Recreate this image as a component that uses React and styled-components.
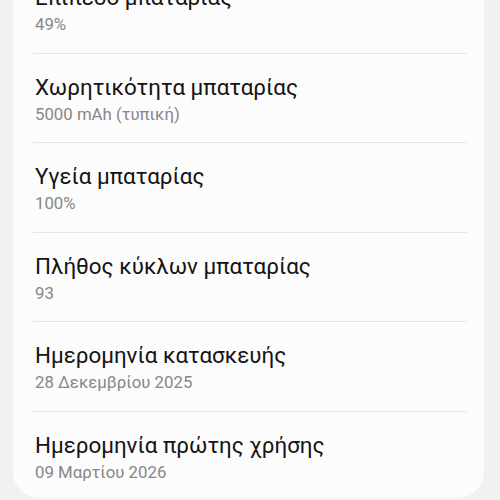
import React from "react";
import styled, { createGlobalStyle } from "styled-components";

const GlobalStyle = createGlobalStyle`
  html, body {
    margin: 0;
    padding: 0;
    background: #f1f1f1;
  }
`;

const Page = styled.div`
  width: 500px;
  height: 500px;
  overflow: hidden;
  padding: 0 16px 0 13px;
  box-sizing: border-box;
  font-family: Roboto, "Noto Sans", sans-serif;
`;

const Card = styled.div`
  margin-top: -36px;
  background: #fcfcfc;
  border-radius: 26px;
  padding: 0 17px 0 20px;
`;

const Row = styled.div`
  display: flex;
  flex-direction: column;
  gap: 3px;
  padding: 19px 0 ${(p) => (p.$last ? "16px" : "18.5px")} 2px;
  border-bottom: ${(p) => (p.$last ? "none" : "1px solid #e6e6e6")};
`;

const Title = styled.div`
  font-size: 22.4px;
  line-height: 28px;
  color: #141414;
`;

const Value = styled.div`
  font-size: 16.8px;
  line-height: 20px;
  color: #878787;
`;

const items = [
  ["Επίπεδο μπαταρίας", "49%"],
  ["Χωρητικότητα μπαταρίας", "5000 mAh (τυπική)"],
  ["Υγεία μπαταρίας", "100%"],
  ["Πλήθος κύκλων μπαταρίας", "93"],
  ["Ημερομηνία κατασκευής", "28 Δεκεμβρίου 2025"],
  ["Ημερομηνία πρώτης χρήσης", "09 Μαρτίου 2026"],
];

export default function App() {
  return (
    <>
      <GlobalStyle />
      <Page>
        <Card>
          {items.map(([title, value], i) => (
            <Row key={title} $last={i === items.length - 1}>
              <Title>{title}</Title>
              <Value>{value}</Value>
            </Row>
          ))}
        </Card>
      </Page>
    </>
  );
}
